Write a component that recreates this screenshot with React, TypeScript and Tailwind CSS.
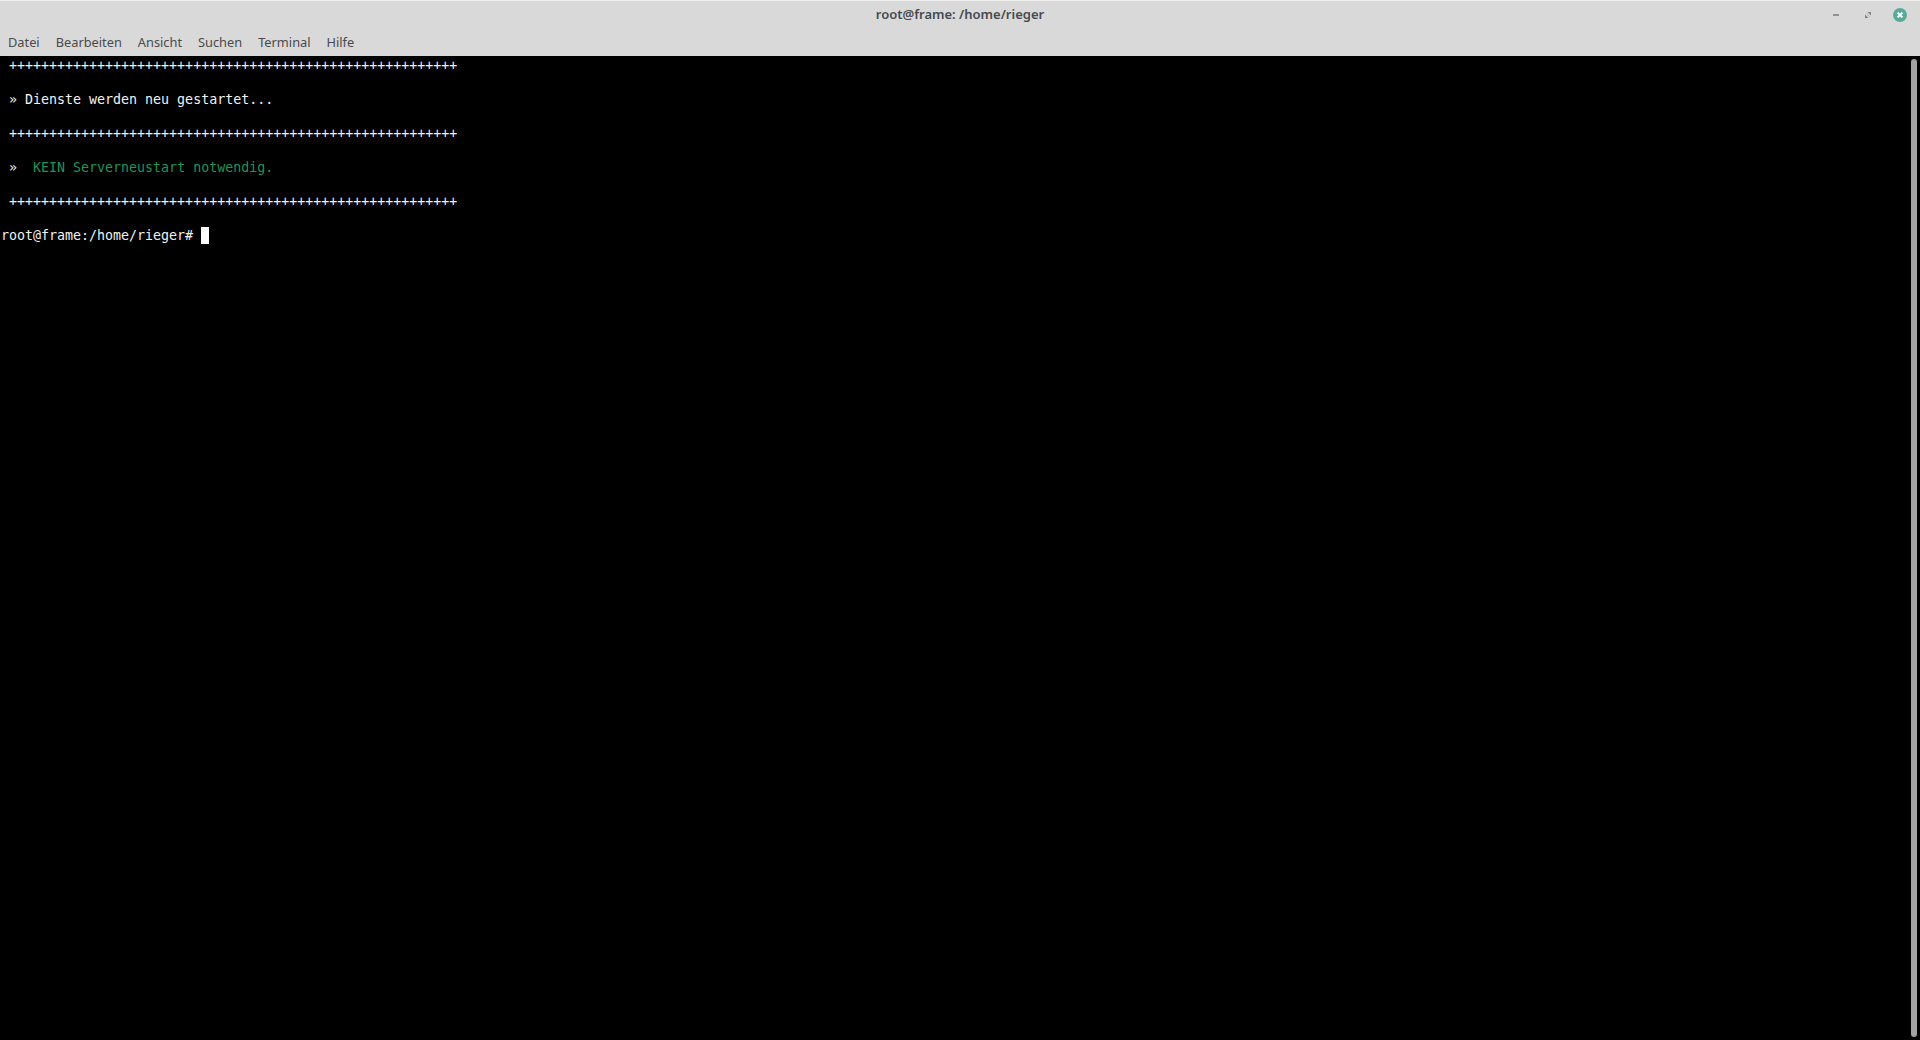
const PLUS = "+".repeat(56);

const rows: { text: string; color?: string; prefix?: string }[] = [
  { text: " " + PLUS },
  { text: "" },
  { text: " » Dienste werden neu gestartet..." },
  { text: "" },
  { text: " " + PLUS },
  { text: "" },
  { prefix: " »  ", text: "KEIN Serverneustart notwendig.", color: "text-[#1f9459]" },
  { text: "" },
  { text: " " + PLUS },
  { text: "" },
];

const menus = ["Datei", "Bearbeiten", "Ansicht", "Suchen", "Terminal", "Hilfe"];

export default function App() {
  return (
    <div className="flex h-[1040px] w-[1920px] flex-col overflow-hidden bg-black">
      <header className="h-[56px] shrink-0 border-t border-t-[#efefef] bg-[#d9d9d9] font-['Noto_Sans',sans-serif] text-[#4a4a4a]">
        <div className="grid h-[27px] grid-cols-[1fr_auto_1fr] items-center">
          <div />
          <h1 className="text-[13px] font-semibold leading-none text-[#454a50]">root@frame: /home/rieger</h1>
          <div className="flex items-center justify-end pr-[13px]">
            <svg width="6" height="2" viewBox="0 0 6 2" className="mr-[26px]">
              <rect width="6" height="2" fill="#8e9296" />
            </svg>
            <svg width="6" height="6" viewBox="0 0 6 6" className="mr-[22px]">
              <path d="M2.5 0H6V3.5Z M0 2.5V6H3.5Z" fill="#808488" />
              <path d="M1 1.5 1.5 1 5 4.5 4.5 5Z" fill="#b4b6b8" />
            </svg>
            <svg width="14" height="14" viewBox="0 0 14 14">
              <circle cx="7" cy="7" r="7" fill="#5aaa9a" />
              <path d="M4.6 4.6 9.4 9.4M9.4 4.6 4.6 9.4" stroke="#fff" strokeWidth="2" />
            </svg>
          </div>
        </div>
        <nav className="flex h-[28px] items-center gap-[16px] pl-[8px] text-[12.8px] leading-none">
          {menus.map((m) => (
            <span key={m}>{m}</span>
          ))}
        </nav>
      </header>
      <main className="flex min-h-0 flex-1">
        <div className="min-w-0 flex-1 pt-[1px] pl-[1px] font-['DejaVu_Sans_Mono',monospace] text-[13.3px] leading-[17px] text-[#f2f2f2]">
          {rows.map((r, i) => (
            <div key={i} className="h-[17px] whitespace-pre">
              {r.prefix}
              <span className={r.color}>{r.text}</span>
            </div>
          ))}
          <div className="flex h-[17px] whitespace-pre">
            <span>root@frame:/home/rieger# </span>
            <span className="h-[17px] w-[8px] bg-white" />
          </div>
        </div>
        <div className="mr-[3px] w-[6px] shrink-0 self-stretch pt-[3px] pb-[3px]">
          <div className="h-full rounded-[3px] bg-[#a3a3a3]" />
        </div>
      </main>
    </div>
  );
}
